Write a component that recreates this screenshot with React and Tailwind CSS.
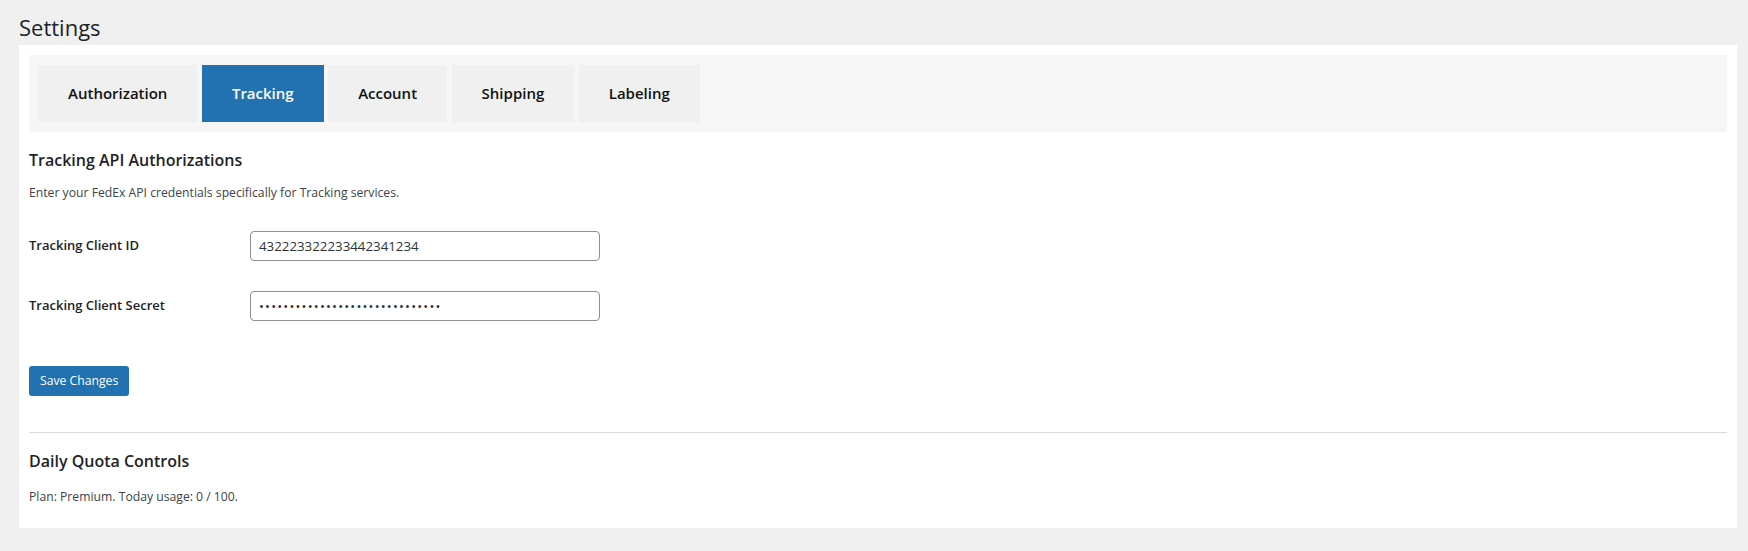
import React from "react";

const tabs = ["Authorization", "Tracking", "Account", "Shipping", "Labeling"];

export default function App() {
  return (
    <div
      className="min-h-screen bg-[#f0f0f1] pl-[19px] pr-[11px] pt-[12px] text-[#1d2327]"
      style={{ fontFamily: '"Open Sans", "Noto Sans", sans-serif' }}
    >
      <h1 className="text-[22px] leading-[30px] font-normal">Settings</h1>
      <div className="mt-[3px] bg-white px-[10px] pt-[10px] pb-[22px]">
        <div className="flex gap-[4.5px] bg-[#f6f6f6] py-[10px] pl-[9px] pr-[10px]">
          {tabs.map((t) => (
            <div
              key={t}
              className={
                t === "Tracking"
                  ? "flex h-[57px] items-center bg-[#2271b1] px-[30px] text-[15px] font-semibold text-white"
                  : "flex h-[57px] items-center bg-[#f0f0f0] px-[30px] text-[15px] font-semibold text-[#111]"
              }
            >
              {t}
            </div>
          ))}
        </div>

        <h2 className="mt-[17px] text-[16px] leading-[22px] font-semibold text-[#1d2327]">
          Tracking API Authorizations
        </h2>
        <p className="mt-[13px] text-[12.2px] leading-[18px] text-[#3c434a]">
          Enter your FedEx API credentials specifically for Tracking services.
        </p>

        <div className="mt-[14px]">
          <div className="flex h-[60px]">
            <div className="w-[221px] pt-[20px] text-[13px] leading-[18px] font-semibold text-[#1d2327]">
              Tracking Client ID
            </div>
            <div className="pt-[15px]">
              <input
                type="text"
                readOnly
                defaultValue="432223322233442341234"
                className="h-[30px] w-[350px] rounded-[4px] border border-[#8c8f94] bg-white px-[8px] text-[13.3px] text-[#2c3338] outline-none"
              />
            </div>
          </div>
          <div className="flex h-[60px]">
            <div className="w-[221px] pt-[20px] text-[13px] leading-[18px] font-semibold text-[#1d2327]">
              Tracking Client Secret
            </div>
            <div className="pt-[15px]">
              <input
                type="password"
                readOnly
                defaultValue="abcdefghijabcdefghijabcdefghij"
                className="h-[30px] w-[350px] rounded-[4px] border border-[#8c8f94] bg-white px-[8px] text-[13px] tracking-[1.2px] text-[#2c3338] outline-none"
              />
            </div>
          </div>
        </div>

        <button className="mt-[30px] h-[30px] rounded-[3px] bg-[#2271b1] px-[11px] text-[12.2px] text-white">
          Save Changes
        </button>

        <hr className="mt-[36px] border-0 border-t border-[#dcdcde]" />

        <h2 className="mt-[17px] text-[16px] leading-[22px] font-semibold text-[#1d2327]">
          Daily Quota Controls
        </h2>
        <p className="mt-[16px] text-[12.2px] leading-[18px] text-[#3c434a]">
          Plan: Premium. Today usage: 0 / 100.
        </p>
      </div>
    </div>
  );
}
